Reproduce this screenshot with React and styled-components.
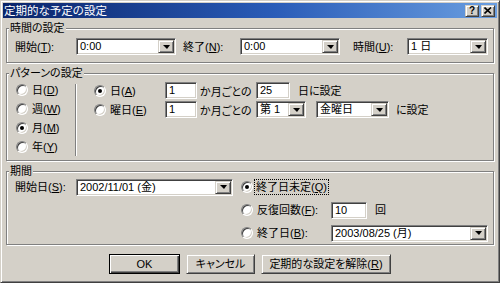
import styled, { createGlobalStyle, css } from "styled-components";

const FACE = "#d4d0c8";

const GlobalStyle = createGlobalStyle`
  * {
    margin: 0;
    padding: 0;
    box-sizing: border-box;
  }
  html, body {
    width: 500px;
    height: 283px;
    overflow: hidden;
    background: ${FACE};
  }
  body {
    font-family: "Liberation Sans", "Noto Sans CJK JP", sans-serif;
    font-size: 11px;
    font-feature-settings: "palt";
    color: #000;
  }
  u {
    text-decoration: underline;
    text-underline-offset: 1px;
  }
`;

const raised = css`
  border: 1px solid;
  border-color: ${FACE} #404040 #404040 ${FACE};
  box-shadow: inset 1px 1px 0 #fff, inset -1px -1px 0 #808080;
`;

const sunken = css`
  border: 1px solid;
  border-color: #808080 #fff #fff #808080;
  box-shadow: inset 1px 1px 0 #404040, inset -1px -1px 0 ${FACE};
`;

const Window = styled.div`
  width: 500px;
  height: 283px;
  background: ${FACE};
  ${raised}
  padding: 2px;
  display: flex;
  flex-direction: column;
`;

const TitleBar = styled.div`
  flex: none;
  height: 15px;
  display: flex;
  align-items: center;
  justify-content: space-between;
  padding: 0 2px 0 1px;
  background: linear-gradient(to right, #0a246a, #2a5cb8 55%, #6a9ee0);
  color: #fff;
`;

const Title = styled.span`
  font-size: 11.5px;
  line-height: 14px;
  white-space: nowrap;
`;

const CapButtons = styled.div`
  display: flex;
  gap: 2px;
`;

const CapButton = styled.span`
  ${raised}
  width: 14px;
  height: 12px;
  background: ${FACE};
  color: #000;
  display: flex;
  align-items: center;
  justify-content: center;
  font-weight: bold;
  font-size: 10px;
  line-height: 10px;
`;

const Content = styled.div`
  padding: 10px 3px 0;
  display: flex;
  flex-direction: column;
`;

const Group = styled.section`
  position: relative;
  border: 1px solid #808080;
  box-shadow: inset 1px 1px 0 #fff, 1px 1px 0 #fff;
  margin-top: ${(p) => p.$mt || 0}px;
  padding: ${(p) => p.$pad};
`;

const Caption = styled.span`
  position: absolute;
  top: -8px;
  left: 2px;
  padding: 0 1px;
  background: ${FACE};
  line-height: 14px;
  white-space: nowrap;
`;

const Row = styled.div`
  display: flex;
  align-items: center;
  height: ${(p) => p.$h || 17}px;
`;

const Label = styled.span`
  flex: none;
  width: ${(p) => (p.$w ? `${p.$w}px` : "auto")};
  margin-left: ${(p) => p.$ml || 0}px;
  line-height: 14px;
  white-space: nowrap;
`;

const ComboBox = styled.div`
  ${sunken}
  flex: none;
  width: ${(p) => p.$w}px;
  height: 17px;
  margin-left: ${(p) => p.$ml || 0}px;
  background: #fff;
  display: flex;
  align-items: center;
  padding: 1px 1px 1px 3px;
`;

const FieldText = styled.span`
  flex: 1;
  min-width: 0;
  line-height: 13px;
  white-space: nowrap;
`;

const DropButton = styled.span`
  ${raised}
  flex: none;
  align-self: stretch;
  width: 16px;
  background: ${FACE};
  display: flex;
  align-items: center;
  justify-content: center;
  &::after {
    content: "";
    border-left: 4px solid transparent;
    border-right: 3px solid transparent;
    border-top: 4px solid #000;
  }
`;

const TextBox = styled.div`
  ${sunken}
  flex: none;
  width: ${(p) => p.$w}px;
  height: 17px;
  margin-left: ${(p) => p.$ml || 0}px;
  background: #fff;
  padding: 1px 2px 1px 3px;
  display: flex;
  align-items: center;
`;

const RadioRow = styled.label`
  display: flex;
  align-items: center;
  gap: 4px;
  height: ${(p) => p.$h || 17}px;
  padding-left: ${(p) => p.$pl || 0}px;
  white-space: nowrap;
  line-height: 14px;
  ${(p) => p.$span && "grid-column: 1 / -1;"}
`;

const RadioCircle = styled.span`
  position: relative;
  flex: none;
  width: 12px;
  height: 12px;
  border-radius: 50%;
  background: #fff;
  border: 1px solid;
  border-color: #808080 #fff #fff #808080;
  box-shadow: inset 1px 1px 0 #404040, inset -1px -1px 0 ${FACE};
  ${(p) =>
    p.$on &&
    css`
      &::after {
        content: "";
        position: absolute;
        left: 3px;
        top: 3px;
        width: 4px;
        height: 4px;
        border-radius: 50%;
        background: #000;
      }
    `}
`;

const FocusText = styled.span`
  outline: 1px dotted #000;
  outline-offset: 0;
  padding: 0 1px;
  margin-left: -2px;
`;

const PatternBody = styled.div`
  display: flex;
`;

const FreqColumn = styled.div`
  flex: none;
  width: 60px;
  display: flex;
  flex-direction: column;
`;

const VDivider = styled.div`
  flex: none;
  width: 2px;
  margin-top: 4px;
  border-left: 1px solid #808080;
  border-right: 1px solid #fff;
`;

const RuleGrid = styled.div`
  padding: 2px 0 0 17px;
  display: grid;
  grid-template-columns: 71px 35px 56px auto;
  grid-auto-rows: 17px;
  row-gap: 2px;
  align-items: center;
  align-content: start;
`;

const Cell = styled.div`
  display: flex;
  align-items: center;
  white-space: nowrap;
`;

const PeriodBody = styled.div`
  display: flex;
  align-items: flex-start;
`;

const EndGrid = styled.div`
  margin-left: 8px;
  display: grid;
  grid-template-columns: 90px auto;
  grid-auto-rows: 18px;
  row-gap: 5px;
  align-items: center;
`;

const ButtonRow = styled.div`
  display: flex;
  justify-content: center;
  gap: 6px;
  margin-top: 9px;
`;

const Button = styled.button`
  ${raised}
  width: ${(p) => p.$w}px;
  height: 20px;
  background: ${FACE};
  font: inherit;
  font-feature-settings: "palt";
  line-height: 14px;
  color: #000;
  white-space: nowrap;
  ${(p) =>
    p.$default &&
    css`
      border: 1px solid #000;
      box-shadow: inset 1px 1px 0 #fff, inset -1px -1px 0 #404040,
        inset -2px -2px 0 #808080;
    `}
`;

const Combo = ({ w, ml, children }) => (
  <ComboBox $w={w} $ml={ml}>
    <FieldText>{children}</FieldText>
    <DropButton />
  </ComboBox>
);

const Edit = ({ w, ml, children }) => (
  <TextBox $w={w} $ml={ml}>
    <FieldText>{children}</FieldText>
  </TextBox>
);

const Radio = ({ on, children, ...rest }) => (
  <RadioRow {...rest}>
    <RadioCircle $on={on} />
    {children}
  </RadioRow>
);

const frequencies = [
  { text: "日", key: "D" },
  { text: "週", key: "W" },
  { text: "月", key: "M", on: true },
  { text: "年", key: "Y" },
];

export default function App() {
  return (
    <>
      <GlobalStyle />
      <Window>
        <TitleBar>
          <Title>定期的な予定の設定</Title>
          <CapButtons>
            <CapButton>?</CapButton>
            <CapButton>
              <svg width="8" height="7" viewBox="0 0 8 7">
                <path d="M0.5 0.5 L7 6.5 M7 0.5 L0.5 6.5" stroke="#000" strokeWidth="1.6" />
              </svg>
            </CapButton>
          </CapButtons>
        </TitleBar>

        <Content>
          <Group $pad="9px 8px 7px 8px">
            <Caption>時間の設定</Caption>
            <Row>
              <Label $w={61}>
                開始(<u>T</u>):
              </Label>
              <Combo w={100}>0:00</Combo>
              <Label $w={57} $ml={7}>
                終了(<u>N</u>):
              </Label>
              <Combo w={100}>0:00</Combo>
              <Label $w={54} $ml={13}>
                時間(<u>U</u>):
              </Label>
              <Combo w={81}>1 日</Combo>
            </Row>
          </Group>

          <Group $mt={10} $pad="6px 8px 4px 8px">
            <Caption>パターンの設定</Caption>
            <PatternBody>
              <FreqColumn>
                {frequencies.map((f) => (
                  <Radio key={f.key} on={f.on} $h={19} $pl={1}>
                    <span>
                      {f.text}(<u>{f.key}</u>)
                    </span>
                  </Radio>
                ))}
              </FreqColumn>
              <VDivider />
              <RuleGrid>
                <Radio on>
                  <span>
                    日(<u>A</u>)
                  </span>
                </Radio>
                <Cell>
                  <Edit w={32}>1</Edit>
                </Cell>
                <Cell>か月ごとの</Cell>
                <Cell>
                  <Edit w={34}>25</Edit>
                  <Label $ml={8}>日に設定</Label>
                </Cell>

                <Radio>
                  <span>
                    曜日(<u>E</u>)
                  </span>
                </Radio>
                <Cell>
                  <Edit w={32}>1</Edit>
                </Cell>
                <Cell>か月ごとの</Cell>
                <Cell>
                  <Combo w={50}>第 1</Combo>
                  <Combo w={73} ml={10}>
                    金曜日
                  </Combo>
                  <Label $ml={7}>に設定</Label>
                </Cell>
              </RuleGrid>
            </PatternBody>
          </Group>

          <Group $mt={10} $pad="6px 8px 2px 8px">
            <Caption>期間</Caption>
            <PeriodBody>
              <Row $h={18}>
                <Label $w={61}>
                  開始日(<u>S</u>):
                </Label>
                <Combo w={157}>2002/11/01 (金)</Combo>
              </Row>
              <EndGrid>
                <Radio on $span $h={18}>
                  <FocusText>
                    終了日未定(<u>Q</u>)
                  </FocusText>
                </Radio>

                <Radio $h={18}>
                  <span>
                    反復回数(<u>F</u>):
                  </span>
                </Radio>
                <Cell>
                  <Edit w={36}>10</Edit>
                  <Label $ml={8}>回</Label>
                </Cell>

                <Radio $h={18}>
                  <span>
                    終了日(<u>B</u>):
                  </span>
                </Radio>
                <Cell>
                  <Combo w={157}>2003/08/25 (月)</Combo>
                </Cell>
              </EndGrid>
            </PeriodBody>
          </Group>

          <ButtonRow>
            <Button $w={71} $default>
              OK
            </Button>
            <Button $w={69}>キャンセル</Button>
            <Button $w={130}>
              定期的な設定を解除(<u>R</u>)
            </Button>
          </ButtonRow>
        </Content>
      </Window>
    </>
  );
}
